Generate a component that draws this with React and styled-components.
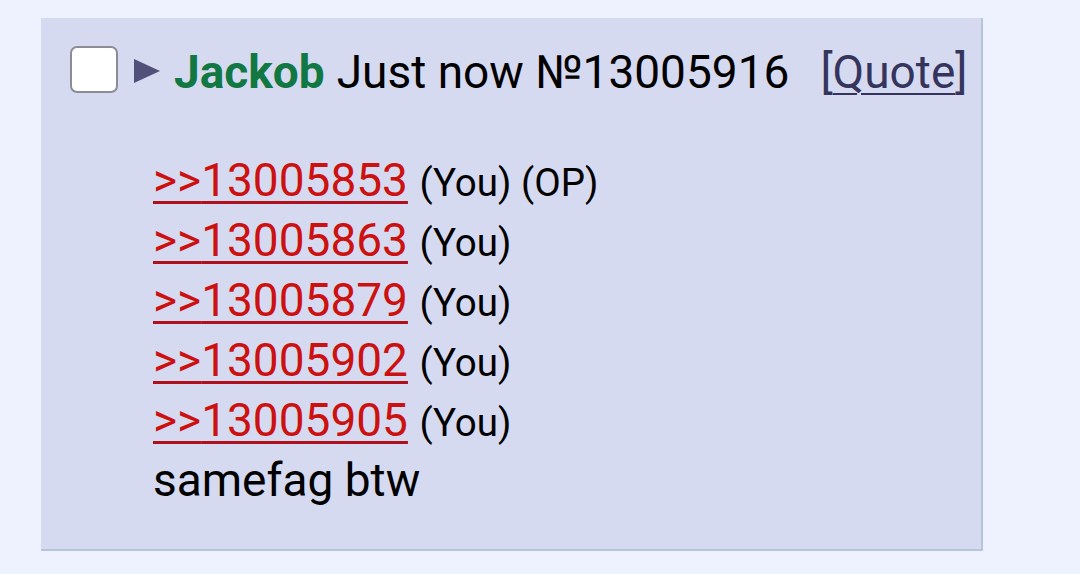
import React from "react";
import styled, { createGlobalStyle } from "styled-components";

const Global = createGlobalStyle`
  html, body { margin: 0; padding: 0; background: #eef2ff; }
  body { font-family: Roboto, "Noto Sans", sans-serif; color: #000; }
`;

const Page = styled.div`
  padding: 18px 0 0 41px;
`;

const Post = styled.div`
  box-sizing: border-box;
  width: 942px;
  height: 533px;
  background: #d6daf0;
  border-right: 2px solid #b7c5d9;
  border-bottom: 2px solid #b7c5d9;
  padding: 27px 0 0 29px;
`;

const Header = styled.div`
  display: flex;
  align-items: center;
  height: 54px;
  font-size: 46px;
  line-height: 54px;
  white-space: nowrap;
`;

const Check = styled.span`
  box-sizing: border-box;
  width: 48px;
  height: 47px;
  border: 2px solid #8c8c96;
  border-radius: 7px;
  background: #fff;
  margin-top: -5px;
  flex: none;
`;

const Arrow = styled.svg`
  margin: -2px 14px 0 16px;
  flex: none;
`;

const Name = styled.span`
  color: #117743;
  font-weight: 700;
`;

const Meta = styled.span`
  margin-left: 12px;
`;

const QuoteLink = styled.span`
  margin-left: 31px;
  color: #34345c;
  u { text-decoration-thickness: 2px; text-underline-offset: 5px; }
`;

const Body = styled.div`
  margin: 51px 0 0 83px;
  font-size: 46px;
  line-height: 60px;
`;

const Line = styled.div`
  height: 60px;
  white-space: nowrap;
`;

const Ref = styled.a`
  color: #cc1111;
  text-decoration: underline;
  text-decoration-color: #b0101c;
  text-decoration-thickness: 3px;
  text-underline-offset: 5px;
`;

const You = styled.span`
  font-size: 38.5px;
  line-height: 1;
`;

const refs = [
  { id: "13005853", tag: "(You) (OP)" },
  { id: "13005863", tag: "(You)" },
  { id: "13005879", tag: "(You)" },
  { id: "13005902", tag: "(You)" },
  { id: "13005905", tag: "(You)" },
];

export default function App() {
  return (
    <>
      <Global />
      <Page>
        <Post>
          <Header>
            <Check />
            <Arrow width="26" height="26" viewBox="0 0 26 26">
              <polygon points="0,1 26,13 0,25" fill="#50507a" />
            </Arrow>
            <Name>Jackob</Name>
            <Meta>Just now №13005916</Meta>
            <QuoteLink>
              [<u>Quote</u>]
            </QuoteLink>
          </Header>
          <Body>
            {refs.map((r) => (
              <Line key={r.id}>
                <Ref>&gt;&gt;{r.id}</Ref> <You>{r.tag}</You>
              </Line>
            ))}
            <Line>samefag btw</Line>
          </Body>
        </Post>
      </Page>
    </>
  );
}
